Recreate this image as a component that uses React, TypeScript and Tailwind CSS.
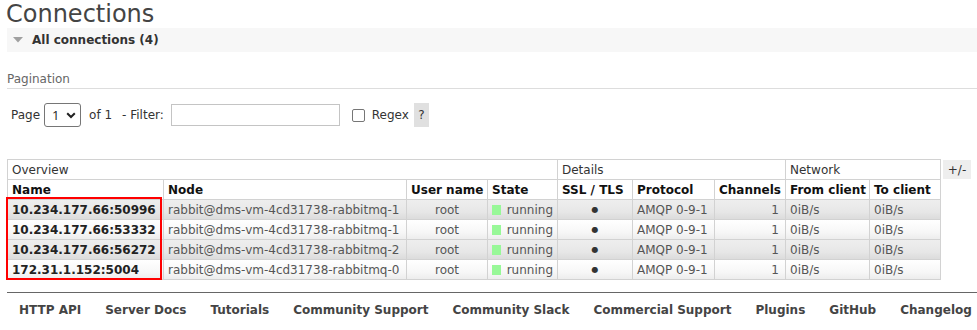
import React from "react";

const ROW =
  "grid grid-cols-[156px_243px_81px_70px_75px_82px_71px_84px_71px] border-l border-[#d2d2d2]";
const CELL = "border-r border-b border-[#d2d2d2] px-[4px] flex items-center whitespace-nowrap overflow-hidden";

const rows = [
  { name: "10.234.177.66:50996", node: "rabbit@dms-vm-4cd31738-rabbitmq-1" },
  { name: "10.234.177.66:53332", node: "rabbit@dms-vm-4cd31738-rabbitmq-1" },
  { name: "10.234.177.66:56272", node: "rabbit@dms-vm-4cd31738-rabbitmq-2" },
  { name: "172.31.1.152:5004", node: "rabbit@dms-vm-4cd31738-rabbitmq-0" },
];

const footerLinks = [
  "HTTP API",
  "Server Docs",
  "Tutorials",
  "Community Support",
  "Community Slack",
  "Commercial Support",
  "Plugins",
  "GitHub",
  "Changelog",
];

export default function App() {
  return (
    <div className="w-[977px] h-[330px] overflow-hidden bg-white pl-[7px] font-['DejaVu_Sans',Verdana,sans-serif] text-[12px] text-[#333]">
      <h1 className="text-[24px] leading-[28px] font-normal text-[#444] -ml-[1px]">Connections</h1>

      <div className="h-[24px] bg-[#f7f7f7] flex items-center">
        <svg width="10" height="6" viewBox="0 0 10 6" className="ml-[6px]">
          <path d="M0 0 L10 0 L5 5.5 Z" fill="#a0a0a0" />
        </svg>
        <span className="ml-[9px] font-bold text-[#333] leading-[14px]">All connections (4)</span>
      </div>

      <div className="mt-[20px] pb-[2px] border-b border-[#dddddd] leading-[14px] text-[#666]">
        Pagination
      </div>

      <div className="mt-[14px] h-[24px] flex items-center text-[#333] leading-[14px]">
        <span className="ml-[4px]">Page</span>
        <div className="relative ml-[4px] w-[37px] h-[24px]">
          <select className="appearance-none w-full h-full border border-[#767676] rounded-[3px] bg-white pl-[7px] text-[13px] font-['Open_Sans',sans-serif] text-[#222] outline-none">
            <option>1</option>
          </select>
          <svg
            width="10"
            height="7"
            viewBox="0 0 10 7"
            className="absolute left-[22px] top-[9px] pointer-events-none"
          >
            <path d="M1.2 1.2 L5 5 L8.8 1.2" fill="none" stroke="#222" strokeWidth="2" />
          </svg>
        </div>
        <span className="ml-[8px]">of 1</span>
        <span className="ml-[10px]">- Filter:</span>
        <input
          type="text"
          className="ml-[7px] w-[169px] h-[22px] border border-[#c4c4c4] bg-white outline-none"
        />
        <span className="ml-[12px] w-[13px] h-[13px] border border-[#767676] rounded-[2px] bg-white" />
        <span className="ml-[7px]">Regex</span>
        <span className="ml-[5px] w-[15px] h-[24px] bg-[#e0e0e0] flex items-center justify-center text-[#333]">
          ?
        </span>
      </div>

      <div className="relative mt-[32px] flex items-start">
        <div className="w-[934px]">
          <div className={ROW}>
            <div className={`${CELL} col-span-4 h-[21px] border-t text-[#333]`}>Overview</div>
            <div className={`${CELL} col-span-3 h-[21px] border-t text-[#333]`}>Details</div>
            <div className={`${CELL} col-span-2 h-[21px] border-t text-[#333]`}>Network</div>
          </div>
          <div className={`${ROW} font-bold text-[#111]`}>
            <div className={`${CELL} h-[20px]`}>Name</div>
            <div className={`${CELL} h-[20px]`}>Node</div>
            <div className={`${CELL} h-[20px]`}>User name</div>
            <div className={`${CELL} h-[20px]`}>State</div>
            <div className={`${CELL} h-[20px]`}>SSL / TLS</div>
            <div className={`${CELL} h-[20px]`}>Protocol</div>
            <div className={`${CELL} h-[20px]`}>Channels</div>
            <div className={`${CELL} h-[20px]`}>From client</div>
            <div className={`${CELL} h-[20px]`}>To client</div>
          </div>
          {rows.map((r, i) => (
            <div
              key={r.name}
              className={`${ROW} text-[#555] ${
                i % 2 === 0
                  ? "bg-linear-to-b from-[#eeeeee] via-[#e7e7e7] via-60% to-[#dddddd] to-90%"
                  : "bg-linear-to-b from-[#ffffff] via-[#f7f7f7] via-60% to-[#eeeeee] to-90%"
              }`}
            >
              <div className={`${CELL} h-[20px] font-bold text-[#222]`}>{r.name}</div>
              <div className={`${CELL} h-[20px]`}>{r.node}</div>
              <div className={`${CELL} h-[20px] justify-center`}>root</div>
              <div className={`${CELL} h-[20px]`}>
                <span className="w-[10px] h-[10px] bg-[#98f898] mr-[6px]" />
                running
              </div>
              <div className={`${CELL} h-[20px] justify-center text-[8px] text-[#333]`}>●</div>
              <div className={`${CELL} h-[20px]`}>AMQP 0-9-1</div>
              <div className={`${CELL} h-[20px] justify-end pr-[6px]`}>1</div>
              <div className={`${CELL} h-[20px]`}>0iB/s</div>
              <div className={`${CELL} h-[20px]`}>0iB/s</div>
            </div>
          ))}
        </div>
        <div className="ml-[2px] mt-[1px] w-[28px] h-[19px] bg-[#eeeeee] flex items-center justify-center text-[#333]">
          +/-
        </div>
        <div className="absolute left-[-1px] top-[38px] w-[156px] h-[83px] border-2 border-[#ff0000] pointer-events-none" />
      </div>

      <div className="mt-[12px] border-t border-[#666] pt-[10px] flex font-bold text-[#444] leading-[14px]">
        {footerLinks.map((l) => (
          <span key={l} className="px-[12px] whitespace-nowrap">
            {l}
          </span>
        ))}
      </div>
    </div>
  );
}
